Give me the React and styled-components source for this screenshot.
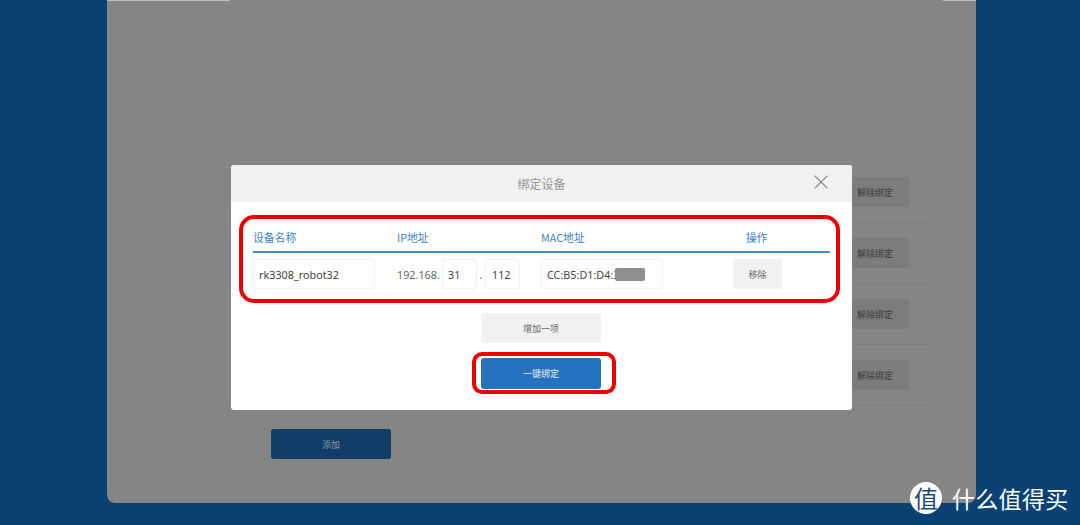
import React from "react";
import styled, { createGlobalStyle } from "styled-components";
import { X } from "lucide-react";

const GlobalStyle = createGlobalStyle`
  html, body {
    margin: 0;
    padding: 0;
    height: 100%;
    overflow: hidden;
    background: #0b4173;
  }
  * {
    box-sizing: border-box;
  }
`;

const FONT = `"Noto Sans CJK SC", "Noto Sans", sans-serif`;

const Page = styled.div`
  width: 1080px;
  height: 525px;
  padding: 0 104px 22px 107px;
  background: #0b4173;
  position: relative;
  overflow: hidden;
  font-family: ${FONT};
`;

const Panel = styled.div`
  height: 100%;
  background: #858585;
  border-radius: 0 0 8px 8px;
  padding: 162px 44px 0 164px;
  display: flex;
  flex-direction: column;
  position: relative;

  /* light edge left over at the top of the panel, only towards the corners */
  &::before {
    content: "";
    position: absolute;
    left: 0;
    right: 0;
    top: 0;
    height: 1px;
    background: linear-gradient(
      to right,
      #bdbdbd 123px,
      transparent 123px,
      transparent 836px,
      #bdbdbd 836px
    );
  }
`;

const Row = styled.div`
  height: 61px;
  flex: none;
  display: flex;
  align-items: center;
  justify-content: flex-end;
  padding-right: 23px;
  border-bottom: 1px solid #7d7d7d;
`;

const UnbindButton = styled.div`
  width: 68px;
  height: 30px;
  background: #7c7c7c;
  border-radius: 2px;
  color: #3a3a3a;
  font-size: 9px;
  display: flex;
  align-items: center;
  justify-content: flex-end;
  padding-right: 16px;
`;

const AddButton = styled.div`
  width: 120px;
  height: 30px;
  flex: none;
  margin-top: 23px;
  background: #123d68;
  border-radius: 3px;
  color: #8a9bad;
  font-size: 9px;
  display: flex;
  align-items: center;
  justify-content: center;
`;

const Dialog = styled.div`
  position: absolute;
  left: 231px;
  top: 165px;
  width: 621px;
  height: 245px;
  background: #fff;
  border-radius: 3px;
  display: flex;
  flex-direction: column;
  align-items: center;
`;

const DialogHeader = styled.div`
  width: 100%;
  height: 37px;
  flex: none;
  background: #f1f1f1;
  border-radius: 3px 3px 0 0;
  color: #969696;
  font-size: 12px;
  display: flex;
  align-items: center;
  justify-content: center;
  position: relative;
`;

const CloseIcon = styled(X)`
  position: absolute;
  right: 19px;
  top: 5px;
  color: #8a8a8a;
`;

const Highlight = styled.div`
  width: 601px;
  height: 88px;
  flex: none;
  margin-top: 13px;
  margin-left: -4px;
  padding: 0 6px 0 10px;
  border: 4px solid #ee0000;
  border-radius: 15px;
  display: flex;
  flex-direction: column;
`;

const Columns = styled.div`
  display: grid;
  grid-template-columns: 144px 144px 192px 1fr;
  align-items: center;
`;

const HeadRow = styled(Columns)`
  height: 34px;
  flex: none;
  padding-top: 3px;
  border-bottom: 2px solid #4a8ccb;
  color: #3f7fc0;
  font-size: 10.8px;
`;

const OperateHead = styled.span`
  padding-left: 13px;
`;

const BodyRow = styled(Columns)`
  padding-top: 6px;
  color: #444;
  font-size: 10.8px;
  font-family: "Noto Sans", sans-serif;
`;

const Field = styled.div`
  width: ${(p) => p.$w}px;
  height: 30px;
  padding-left: ${(p) => p.$pad}px;
  border: 1px solid #eef1f5;
  border-radius: 3px;
  background: #fff;
  display: flex;
  align-items: center;
  position: relative;
  overflow: hidden;
  white-space: nowrap;
`;

const Masked = styled.span`
  position: absolute;
  left: 73px;
  top: 8px;
  width: 30px;
  height: 13px;
  background: #8f8f8f;
  border-radius: 2px;
`;

const IpGroup = styled.div`
  display: flex;
  align-items: center;
`;

const IpPrefix = styled.span`
  width: 45px;
  color: #666;
`;

const IpDot = styled.span`
  width: 8px;
  text-align: center;
  color: #666;
`;

const RemoveButton = styled.div`
  width: 49px;
  height: 30px;
  background: #f1f1f1;
  border-radius: 3px;
  color: #666;
  font-size: 9px;
  font-family: ${FONT};
  display: flex;
  align-items: center;
  justify-content: center;
`;

const AddItemButton = styled.div`
  width: 120px;
  height: 30px;
  flex: none;
  margin-top: 10px;
  margin-left: -1px;
  background: #f1f1f1;
  border-radius: 3px;
  color: #666;
  font-size: 9px;
  display: flex;
  align-items: center;
  justify-content: center;
`;

const BindFrame = styled.div`
  width: 144px;
  height: 42px;
  flex: none;
  margin-top: 9px;
  margin-left: 5px;
  padding-left: 5px;
  border: 4px solid #ee0000;
  border-radius: 10px;
  display: flex;
  align-items: center;
`;

const BindButton = styled.div`
  width: 120px;
  height: 31px;
  background: #2672bf;
  border-radius: 3px;
  color: #e4eef8;
  font-size: 9px;
  display: flex;
  align-items: center;
  justify-content: center;
`;

const Watermark = styled.div`
  position: absolute;
  left: 910px;
  top: 482px;
  display: flex;
  align-items: center;
  gap: 10px;
  color: #fff;
`;

const WatermarkBadge = styled.div`
  width: 32px;
  height: 32px;
  border-radius: 50%;
  background: #fff;
  color: #1c4a72;
  font-size: 24px;
  line-height: 32px;
  text-align: center;
  font-family: "Noto Sans CJK SC", sans-serif;
`;

const WatermarkText = styled.div`
  font-size: 23px;
  line-height: 32px;
  letter-spacing: 0.3px;
  white-space: nowrap;
`;

export default function App() {
  return (
    <Page>
      <GlobalStyle />
      <Panel>
        {[0, 1, 2, 3].map((i) => (
          <Row key={i}>
            <UnbindButton>解除绑定</UnbindButton>
          </Row>
        ))}
        <AddButton>添加</AddButton>
      </Panel>

      <Dialog>
        <DialogHeader>
          绑定设备
          <CloseIcon size={24} strokeWidth={1.1} />
        </DialogHeader>
        <Highlight>
          <HeadRow>
            <span>设备名称</span>
            <span>IP地址</span>
            <span>MAC地址</span>
            <OperateHead>操作</OperateHead>
          </HeadRow>
          <BodyRow>
            <Field $w={122} $pad={5}>rk3308_robot32</Field>
            <IpGroup>
              <IpPrefix>192.168.</IpPrefix>
              <Field $w={35} $pad={5}>31</Field>
              <IpDot>.</IpDot>
              <Field $w={35} $pad={6}>112</Field>
            </IpGroup>
            <Field $w={122} $pad={5}>
              CC:B5:D1:D4:3
              <Masked />
            </Field>
            <RemoveButton>移除</RemoveButton>
          </BodyRow>
        </Highlight>
        <AddItemButton>增加一项</AddItemButton>
        <BindFrame>
          <BindButton>一键绑定</BindButton>
        </BindFrame>
      </Dialog>

      <Watermark>
        <WatermarkBadge>值</WatermarkBadge>
        <WatermarkText>什么值得买</WatermarkText>
      </Watermark>
    </Page>
  );
}
